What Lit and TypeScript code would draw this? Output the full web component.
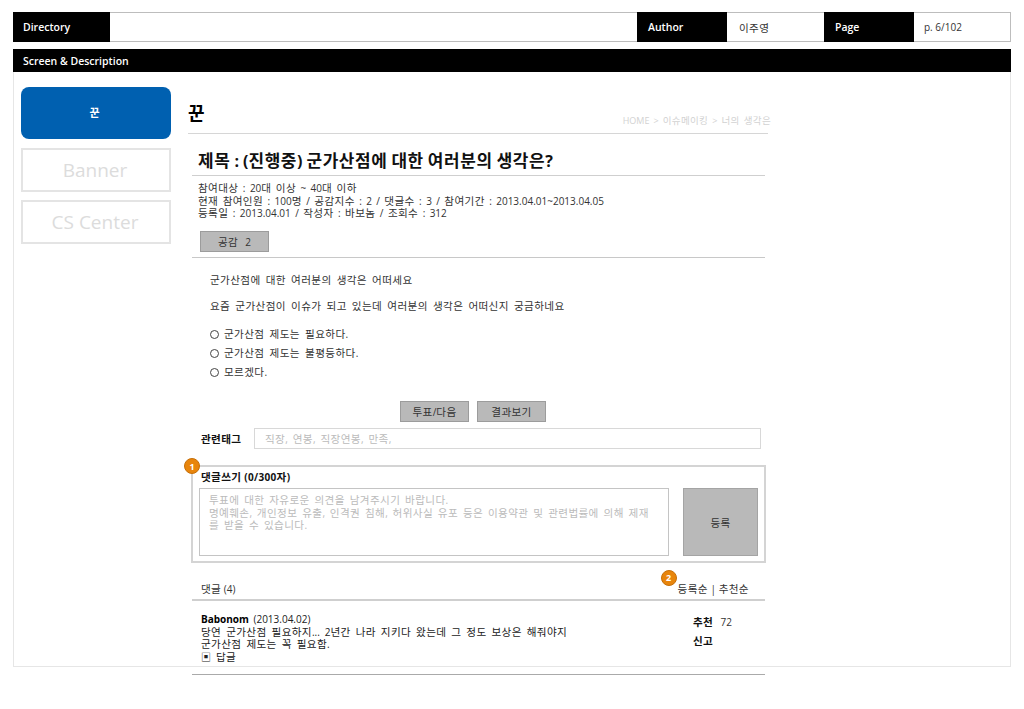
import { LitElement, html, css } from "lit";
import { customElement } from "lit/decorators.js";

const k = (s: string) =>
  s.split(/([\uAC00-\uD7A3]+)/).map((part, i) => (i % 2 ? html`<span class="k">${part}</span>` : part));

@customElement("app-root")
export class AppRoot extends LitElement {
  static styles = css`
    :host { display: block; width: 1024px; height: 709px; overflow: hidden; background: #fff; font-family: "Open Sans", "Noto Sans CJK KR", sans-serif; font-size: 10px; color: #222; }
    * { box-sizing: border-box; }
    .k { font-size: 1.06em; letter-spacing: 0.035em; }
    .page { padding: 12px 13px 0 13px; }
    .top { display: flex; height: 30px; width: 998px; border: 1px solid #bdbdbd; border-left: 0; align-items: stretch; }
    .lab { background: #000; color: #fff; font-weight: 600; font-size: 10.5px; display: flex; align-items: center; padding-left: 10px; margin: -1px 0; }
    .val { display: flex; align-items: center; padding-left: 12px; color: #333; font-size: 10px; }
    .l1 { width: 97px; }
    .spacer { flex: 1; }
    .l2 { width: 90px; padding-left: 11px; }
    .v2 { width: 97px; }
    .l3 { width: 90px; padding-left: 11px; }
    .v3 { width: 96px; padding-left: 10px; }
    .sec { margin-top: 7px; height: 23px; width: 998px; background: #000; color: #fff; font-weight: 600; font-size: 10.5px; display: flex; align-items: center; padding-left: 10px; }
    .frame { width: 998px; height: 595px; border: 1px solid #e6e6e6; border-top: 0; display: flex; padding: 15px 0 0 7px; gap: 17px; }
    .side { width: 150px; display: flex; flex-direction: column; gap: 9px; flex: none; }
    .blue { height: 52px; background: #0060b0; border-radius: 8px; color: #fff; font-size: 11px; font-weight: 600; display: flex; align-items: center; justify-content: center; padding: 0 3px 3px 0; }
    .ghost { height: 44px; border: 2px solid #e4e4e4; color: #dcdcdc; font-size: 19px; display: flex; align-items: center; justify-content: center; padding-right: 2px; }
    .ghost + .ghost { margin-top: -1px; }
    .main { width: 582px; flex: none; }
    .head { height: 47px; width: 580px; border-bottom: 1px solid #d6d6d6; display: flex; justify-content: space-between; align-items: flex-end; }
    .head h1 { margin: 0 0 7px; font-size: 18px; font-weight: 700; color: #000; line-height: 26px; }
    .crumb { font-size: 9px; color: #d2d2d2; margin: 0 -3px 6px 0; line-height: 12px; word-spacing: 1.7px; }
    .body { margin-left: 4px; width: 573px; }
    .title { height: 42px; border-bottom: 1px solid #cfcfcf; padding: 12px 0 3px 6px; display: flex; align-items: center; font-size: 16px; font-weight: 700; color: #111; word-spacing: -0.1px; }
    .meta { padding: 6px 0 0 6px; line-height: 12.5px; font-size: 10px; color: #333; height: 55px; word-spacing: 1.8px; }
    .btn { background: #b9b9b9; border: 1px solid #9c9c9c; color: #333; font-size: 10px; width: 69px; height: 21px; display: flex; align-items: center; justify-content: center; word-spacing: 1px; }
    .btn-row { padding-left: 8px; height: 27px; border-bottom: 1px solid #c8c8c8; }
    .content { padding: 14px 0 0 18px; color: #333; font-size: 10px; height: 143px; word-spacing: 2.5px; }
    .content p { margin: 0; line-height: 16px; }
    .content p + p { margin-top: 10px; }
    .opts { margin-top: 12px; display: flex; flex-direction: column; gap: 3px; }
    .opt { line-height: 16px; display: flex; align-items: center; gap: 5px; }
    .radio { width: 9px; height: 9px; border: 1px solid #444; border-radius: 50%; flex: none; }
    .vote { display: flex; justify-content: center; gap: 8px; padding-right: 11px; height: 21px; }
    .tags { margin-top: 6px; display: flex; align-items: center; height: 21px; padding-left: 9px; }
    .tags b { font-size: 10px; font-weight: 700; color: #111; width: 53px; flex: none; letter-spacing: 0.8px; }
    .tagbox { width: 507px; height: 21px; border: 1px solid #d8d8d8; color: #bbb; padding-left: 10px; display: flex; align-items: center; word-spacing: 2.3px; }
    .write { position: relative; margin-top: 16px; height: 98px; width: 575px; margin-left: -1px; border: 2px solid #d4d4d4; padding: 2px 6px 0 6px; }
    .write h3 { margin: 0 0 0 2px; font-size: 10px; font-weight: 700; color: #111; line-height: 16px; letter-spacing: 0.3px; }
    .wrow { display: flex; justify-content: space-between; margin-top: 3px; }
    .ta { width: 470px; height: 68px; border: 1px solid #c4c4c4; color: #bbb; padding: 5px 9px; line-height: 12.5px; word-spacing: 2.2px; }
    .reg { width: 75px; height: 68px; background: #b9b9b9; border: 1px solid #a4a4a4; color: #333; display: flex; align-items: center; justify-content: center; }
    .dot { position: absolute; width: 16px; height: 16px; border-radius: 50%; background: #e8850c; border: 1px solid #c66f08; color: #fff; font-size: 9px; font-weight: 700; display: flex; align-items: center; justify-content: center; word-spacing: 0; }
    .d1 { left: -9px; top: -9px; }
    .d2 { left: -17px; top: -12px; }
    .chead { height: 38px; border-bottom: 2px solid #cfcfcf; display: flex; justify-content: space-between; align-items: flex-end; padding: 0 16px 3px 9px; line-height: 14px; color: #333; }
    .sort { position: relative; }
    .cmt { height: 74px; display: flex; padding: 12px 0 0 9px; border-bottom: 1px solid #aaa; }
    .ctext { width: 492px; line-height: 12.5px; color: #222; word-spacing: 2.3px; white-space: nowrap; }
    .ctext b { font-weight: 700; color: #000; }
    .stamp { word-spacing: 2px; }
    .cside { line-height: 19px; color: #333; }
    .cside b { font-weight: 700; color: #111; display: inline-block; width: 25px; letter-spacing: 0.5px; }
  `;

  render() {
    return html`
      <div class="page">
        <div class="top">
          <div class="lab l1">Directory</div>
          <div class="spacer"></div>
          <div class="lab l2">Author</div>
          <div class="val v2">${k("이주영")}</div>
          <div class="lab l3">Page</div>
          <div class="val v3">p. 6/102</div>
        </div>
        <div class="sec">Screen &amp; Description</div>
        <div class="frame">
          <div class="side">
            <div class="blue">꾼</div>
            <div class="ghost">Banner</div>
            <div class="ghost">CS Center</div>
          </div>
          <div class="main">
            <div class="head">
              <h1>꾼</h1>
              <div class="crumb">${k("HOME > 이슈메이킹 > 너의 생각은")}</div>
            </div>
            <div class="body">
              <div class="title"><span>${k("제목 : (진행중) 군가산점에 대한 여러분의 생각은?")}</span></div>
              <div class="meta">
                ${k("참여대상 : 20대 이상 ~ 40대 이하")}<br />
                ${k("현재 참여인원 : 100명 / 공감지수 : 2 / 댓글수 : 3 / 참여기간 : 2013.04.01~2013.04.05")}<br />
                ${k("등록일 : 2013.04.01 / 작성자 : 바보놈 / 조회수 : 312")}
              </div>
              <div class="btn-row"><div class="btn"><span>${k("공감")}&nbsp;&nbsp;2</span></div></div>
              <div class="content">
                <p>${k("군가산점에 대한 여러분의 생각은 어떠세요")}</p>
                <p>${k("요즘 군가산점이 이슈가 되고 있는데 여러분의 생각은 어떠신지 궁금하네요")}</p>
                <div class="opts">
                  <div class="opt"><span class="radio"></span><span>${k("군가산점 제도는 필요하다.")}</span></div>
                  <div class="opt"><span class="radio"></span><span>${k("군가산점 제도는 불평등하다.")}</span></div>
                  <div class="opt"><span class="radio"></span><span>${k("모르겠다.")}</span></div>
                </div>
              </div>
              <div class="vote">
                <div class="btn"><span>${k("투표/다음")}</span></div>
                <div class="btn"><span>${k("결과보기")}</span></div>
              </div>
              <div class="tags"><b>${k("관련태그")}</b><div class="tagbox"><span>${k("직장, 연봉, 직장연봉, 만족,")}</span></div></div>
              <div class="write">
                <span class="dot d1">1</span>
                <h3>${k("댓글쓰기 (0/300자)")}</h3>
                <div class="wrow">
                  <div class="ta">${k("투표에 대한 자유로운 의견을 남겨주시기 바랍니다.")}<br />${k("명예훼손, 개인정보 유출, 인격권 침해, 허위사실 유포 등은 이용약관 및 관련법률에 의해 제재")}<br />${k("를 받을 수 있습니다.")}</div>
                  <div class="reg">${k("등록")}</div>
                </div>
              </div>
              <div class="chead">
                <span>${k("댓글 (4)")}</span>
                <span class="sort"><span class="dot d2">2</span>${k("등록순 | 추천순")}</span>
              </div>
              <div class="cmt">
                <div class="ctext"><span class="stamp"><b>Babonom</b> (2013.04.02)</span><br />${k("당연 군가산점 필요하지... 2년간 나라 지키다 왔는데 그 정도 보상은 해줘야지")}<br />${k("군가산점 제도는 꼭 필요함.")}<br />▣ ${k("답글")}</div>
                <div class="cside"><b>${k("추천")}</b> 72<br /><b>${k("신고")}</b></div>
              </div>
            </div>
          </div>
        </div>
      </div>
    `;
  }
}
